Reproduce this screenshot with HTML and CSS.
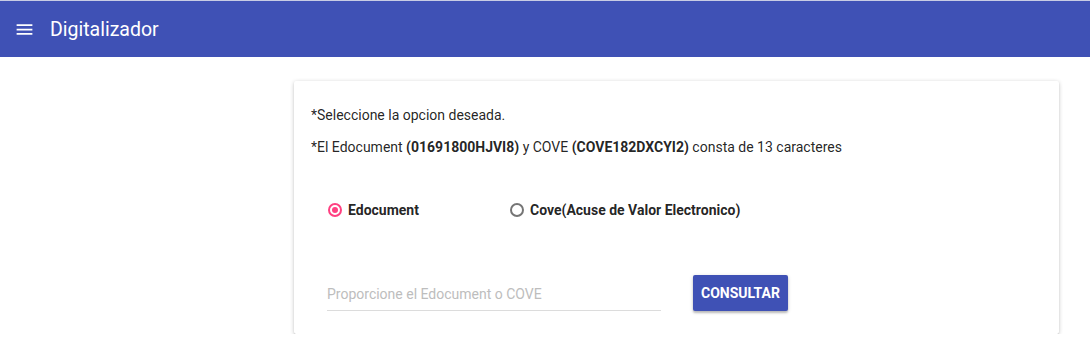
FILE: index.html
```html
<!DOCTYPE html>
<html lang="es">
<head>
    <meta charset="UTF-8">
    <meta name="viewport" content="width=device-width, initial-scale=1.0">
    <title>Digitalizador</title>
    <link rel="stylesheet" href="styles.css">
</head>
<body>
    <!-- Barra superior -->
    <header class="toolbar">
        <svg class="menu-icon" width="24" height="24" viewBox="0 0 24 24">
            <path d="M3 18h18v-2H3v2zm0-5h18v-2H3v2zm0-7v2h18V6H3z" fill="#fff"/>
        </svg>
        <span class="toolbar-title">Digitalizador</span>
    </header>

    <!-- Tarjeta de consulta -->
    <main class="content">
        <div class="card">
            <p class="hint">*Seleccione la opcion deseada.</p>
            <p class="hint">*El Edocument <b>(01691800HJVI8)</b> y COVE <b>(COVE182DXCYI2)</b> consta de 13 caracteres</p>

            <div class="radio-group">
                <label class="radio checked">
                    <span class="radio-circle"></span>
                    <span class="radio-label">Edocument</span>
                </label>
                <label class="radio">
                    <span class="radio-circle"></span>
                    <span class="radio-label">Cove(Acuse de Valor Electronico)</span>
                </label>
            </div>

            <div class="search-row">
                <div class="field">
                    <input type="text" class="field-input" placeholder="Proporcione el Edocument o COVE">
                </div>
                <button class="btn btn-primary">CONSULTAR</button>
            </div>
        </div>
    </main>
</body>
</html>
```

FILE: styles.css
```css
body {
    font-family: Roboto, 'Helvetica Neue', Arial, sans-serif;
    margin: 0;
    padding: 0;
    background: #fff;
    color: rgba(0,0,0,0.87);
}

.toolbar {
    display: flex;
    align-items: center;
    height: 55px;
    background: #3f51b5;
    border-top: 1px solid #c8cce4;
    padding: 1px 14px 0 14px;
    color: #fff;
}

.menu-icon {
    width: 21px;
    height: 21px;
    margin-right: 15px;
}

.toolbar-title {
    font-size: 19.5px;
    font-weight: 400;
}

.content {
    padding: 24px 31px 0 294px;
}

.card {
    background: #fff;
    box-shadow: 0 1px 4px rgba(0,0,0,0.22), 0 1px 1px rgba(0,0,0,0.14), 0 2px 1px -1px rgba(0,0,0,0.12);
    border-radius: 2px;
    padding: 24px 16px 23px 17px;
}

.hint {
    margin: 0 0 12px 0;
    font-size: 14px;
    line-height: 20px;
}

.hint b {
    font-weight: 700;
}

.radio-group {
    display: flex;
    margin: 43px 0 0 17px;
    height: 20px;
}

.radio {
    display: flex;
    align-items: center;
    font-size: 14px;
    font-weight: 700;
    white-space: nowrap;
    cursor: pointer;
}

.radio:first-child {
    width: 182px;
}

.radio-circle {
    box-sizing: border-box;
    width: 14px;
    height: 14px;
    border: 2px solid rgba(0,0,0,0.54);
    border-radius: 50%;
    margin-right: 6px;
    position: relative;
}

.radio.checked .radio-circle {
    border-color: #ff4081;
}

.radio.checked .radio-circle::after {
    content: '';
    position: absolute;
    left: 2px;
    top: 2px;
    width: 6px;
    height: 6px;
    border-radius: 50%;
    background: #ff4081;
}

.search-row {
    display: flex;
    align-items: flex-end;
    gap: 32px;
    margin: 55px 0 0 16px;
}

.field {
    width: 334px;
}

.field-input {
    box-sizing: border-box;
    display: block;
    width: 100%;
    border: none;
    border-bottom: 1px solid #dcdcdc;
    padding: 8px 0 8px 0;
    font-family: inherit;
    font-size: 14px;
    line-height: 16px;
    outline: none;
}

.field-input::placeholder {
    color: #bdbdbd;
}

.btn {
    height: 36px;
    padding: 0 8px;
    font-family: inherit;
    font-size: 14px;
    font-weight: 700;
    border: none;
    border-radius: 2px;
    cursor: pointer;
}

.btn-primary {
    background: #3f51b5;
    color: #fff;
    box-shadow: 0 2px 2px rgba(0,0,0,0.2), 0 1px 4px rgba(0,0,0,0.14);
}
```
